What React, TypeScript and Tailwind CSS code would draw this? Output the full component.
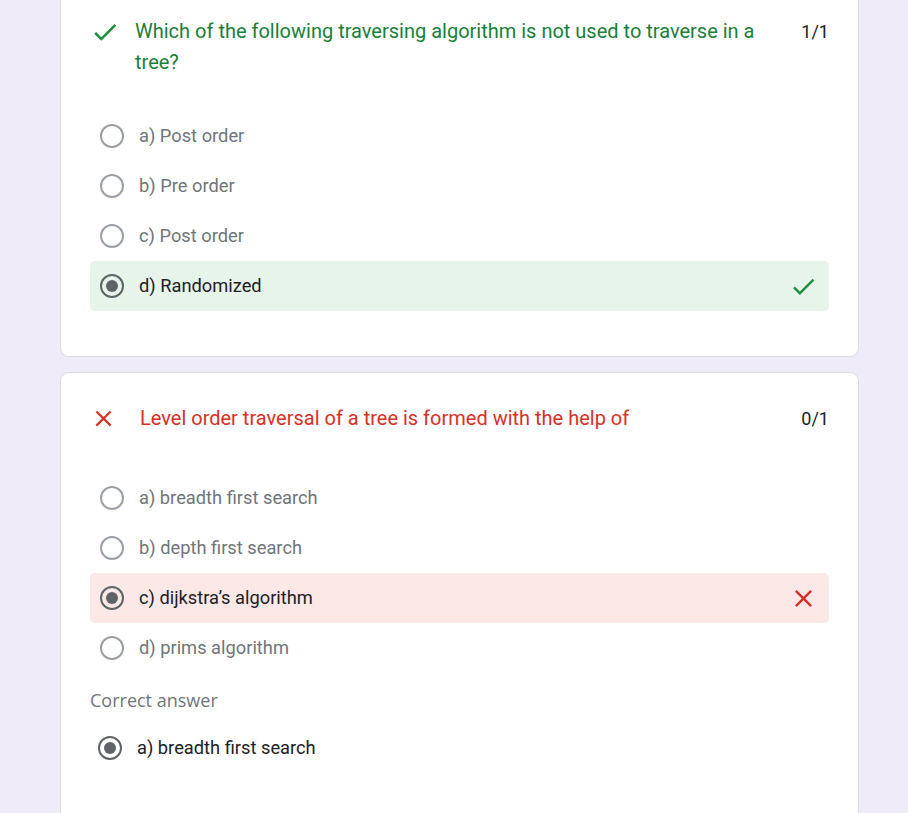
import React from 'react';

type Option = { label: string; state?: 'correct' | 'wrong' };

const font = { fontFamily: 'Roboto, "Liberation Sans", sans-serif' };

function CheckIcon({ className }: { className?: string }) {
    return (
        <svg viewBox="0 0 24 24" className={className} fill="currentColor">
            <path d="M9 16.17L4.83 12l-1.42 1.41L9 19 21 7l-1.41-1.41z" />
        </svg>
    );
}

function CloseIcon({ className }: { className?: string }) {
    return (
        <svg viewBox="0 0 24 24" className={className} fill="currentColor">
            <path d="M19 6.41L17.59 5 12 10.59 6.41 5 5 6.41 10.59 12 5 17.59 6.41 19 12 13.41 17.59 19 19 17.59 13.41 12z" />
        </svg>
    );
}

function Radio({ checked }: { checked?: boolean }) {
    return checked ? (
        <span className="w-6 h-6 shrink-0 rounded-full border-2 border-[#5f6368] flex items-center justify-center">
            <span className="w-3 h-3 rounded-full bg-[#5f6368]" />
        </span>
    ) : (
        <span className="w-6 h-6 shrink-0 rounded-full border-2 border-[#9aa0a6]" />
    );
}

function OptionRow({ option }: { option: Option }) {
    const selected = !!option.state;
    return (
        <div
            className={
                'h-[50px] flex items-center pl-[10px] pr-[11px] rounded-[5px] ' +
                (option.state === 'correct' ? 'bg-[#e6f4ea]' : option.state === 'wrong' ? 'bg-[#fce8e6]' : '')
            }
        >
            <Radio checked={selected} />
            <span className={'ml-[15px] flex-1 text-[18.3px] ' + (selected ? 'text-[#202124]' : 'text-[#70757a]')}>
                {option.label}
            </span>
            {option.state === 'correct' && <CheckIcon className="w-[29px] h-[29px] text-[#1e8e3e]" />}
            {option.state === 'wrong' && <CloseIcon className="w-[29px] h-[29px] text-[#d93025]" />}
        </div>
    );
}

export default function App() {
    const first: Option[] = [
        { label: 'a) Post order' },
        { label: 'b) Pre order' },
        { label: 'c) Post order' },
        { label: 'd) Randomized', state: 'correct' },
    ];
    const second: Option[] = [
        { label: 'a) breadth first search' },
        { label: 'b) depth first search' },
        { label: 'c) dijkstra\u2019s algorithm', state: 'wrong' },
        { label: 'd) prims algorithm' },
    ];

    return (
        <div className="min-h-[813px] bg-[#f0ebf8] overflow-hidden" style={font}>
            {/* Question 1 - correct */}
            <div className="ml-[60px] w-[799px] bg-white border border-t-0 border-[#dadce0] rounded-b-[9px] px-[29px] pt-[16px] pb-[45px]">
                <div className="flex items-start">
                    <div className="w-[45px] shrink-0 h-[31px] flex items-center">
                        <CheckIcon className="w-[30px] h-[30px] text-[#1e8e3e]" />
                    </div>
                    <div className="flex-1 text-[20px] leading-[31px] text-[#188038] pr-[40px]">
                        Which of the following traversing algorithm is not used to traverse in a tree?
                    </div>
                    <div className="text-[18px] leading-[31px] text-[#202124]">1/1</div>
                </div>
                <div className="mt-[33px] flex flex-col">
                    {first.map((o) => (
                        <OptionRow key={o.label} option={o} />
                    ))}
                </div>
            </div>

            {/* Question 2 - wrong */}
            <div className="mt-[15px] ml-[60px] w-[799px] bg-white border border-[#dadce0] rounded-[9px] px-[29px] pt-[30px] pb-[45px]">
                <div className="flex items-start">
                    <div className="w-[50px] shrink-0 h-[31px] flex items-center">
                        <CloseIcon className="w-[27px] h-[27px] text-[#d93025]" />
                    </div>
                    <div className="flex-1 text-[20px] leading-[31px] text-[#d93025]">
                        Level order traversal of a tree is formed with the help of
                    </div>
                    <div className="text-[18px] leading-[31px] text-[#202124]">0/1</div>
                </div>
                <div className="mt-[39px] flex flex-col">
                    {second.map((o) => (
                        <OptionRow key={o.label} option={o} />
                    ))}
                </div>
                <div
                    className="mt-[15px] text-[18px] leading-[24px] font-medium text-[#70757a]"
                    style={{ fontFamily: '"Open Sans", Roboto, sans-serif' }}
                >
                    Correct answer
                </div>
                <div className="mt-[11px] h-[50px] flex items-center pl-[8px]">
                    <Radio checked />
                    <span className="ml-[15px] text-[18.3px] text-[#202124]">a) breadth first search</span>
                </div>
            </div>
        </div>
    );
}
